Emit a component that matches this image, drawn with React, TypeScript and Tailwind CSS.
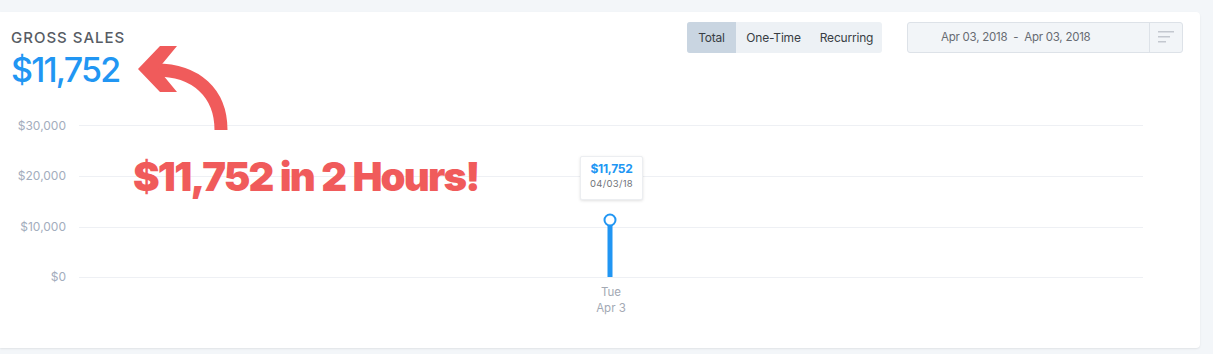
import React from "react";

const font = { fontFamily: "Inter, 'Noto Sans', sans-serif" };

export default function App() {
  return (
    <div className="w-[1213px] h-[354px] bg-[#f3f6f9] pt-[12px]" style={font}>
      <div className="relative w-[1200px] h-[336px] bg-white rounded-r-[4px] shadow-[0_1px_2px_rgba(0,0,0,0.08)] flex flex-col">
        {/* header */}
        <div className="h-[98px] flex justify-between pl-[11px] pr-[17px]">
          <div className="pt-[17px]">
            <div className="text-[15px] leading-[18px] tracking-[1px] text-[#575c64] font-medium">GROSS SALES</div>
            <div className="mt-[4px] text-[34px] leading-[38px] tracking-[-1.8px] text-[#2196f3] font-medium">$11,752</div>
          </div>
          <div className="flex pt-[10px] gap-[25px]">
            <div className="flex h-[31px] bg-[#edf1f5] rounded-[3px] text-[12px] text-[#383d44] tracking-[-0.2px]">
              <div className="w-[49px] flex items-center justify-center bg-[#c9d5e1] rounded-l-[3px]">Total</div>
              <div className="w-[75px] flex items-center justify-center">One-Time</div>
              <div className="w-[71px] flex items-center justify-center">Recurring</div>
            </div>
            <div className="flex h-[31px] w-[276px] bg-[#f2f5f8] border border-[#dde2e8] rounded-[3px]">
              <div className="flex-1 flex items-center pl-[33px] text-[11.5px] tracking-[-0.25px] text-[#676b72] whitespace-pre">Apr 03, 2018  -  Apr 03, 2018</div>
              <div className="w-[33px] border-l border-[#dde2e8] flex items-center justify-center">
                <svg width="17" height="13" viewBox="0 0 17 13">
                  <rect x="0" y="0" width="16" height="1.5" fill="#c3c8cf" />
                  <rect x="0" y="5" width="12" height="1.5" fill="#c3c8cf" />
                  <rect x="0" y="10" width="8" height="1.5" fill="#c3c8cf" />
                </svg>
              </div>
            </div>
          </div>
        </div>
        {/* chart */}
        <svg width="1200" height="238" viewBox="0 0 1200 238" className="block">
          {[15, 66, 117, 167].map((y) => (
            <line key={y} x1="79" x2="1143" y1={y + 0.5} y2={y + 0.5} stroke="#eef0f4" strokeWidth="1" />
          ))}
          <g fill="#a3adbd" fontSize="12" textAnchor="end" fontFamily="Inter, 'Noto Sans', sans-serif">
            <text x="66" y="19.5">$30,000</text>
            <text x="66" y="70">$20,000</text>
            <text x="66" y="121">$10,000</text>
            <text x="66" y="171">$0</text>
          </g>
          <rect x="607.5" y="112" width="5" height="55" fill="#2196f3" />
          <circle cx="610" cy="110" r="5.5" fill="#fff" stroke="#2196f3" strokeWidth="2" />
          <g fill="#a3a9b4" fontSize="11.5" textAnchor="middle" fontFamily="Inter, 'Noto Sans', sans-serif">
            <text x="611" y="186">Tue</text>
            <text x="611" y="202">Apr 3</text>
          </g>
        </svg>

        {/* tooltip */}
        <div className="absolute left-[580px] top-[144px] w-[63px] h-[44px] bg-white border border-[#eceef1] rounded-[2px] shadow-[0_1px_3px_rgba(0,0,0,0.12)] flex flex-col items-center pt-[5px]">
          <div className="text-[12px] leading-[14px] font-bold text-[#2196f3] tracking-[-0.3px]">$11,752</div>
          <div className="text-[9.5px] leading-[12px] mt-[2px] text-[#6f737a] tracking-[0.3px]">04/03/18</div>
        </div>

        {/* annotation */}
        <svg className="absolute left-0 top-[-12px]" width="260" height="150" viewBox="0 0 260 150">
          <path d="M 156 70 C 196 70, 221 93, 221 130" fill="none" stroke="#f05b5b" strokeWidth="13" />
          <polygon points="138,69 160,46 177,46 158,69 177,92 160,92" fill="#f05b5b" />
        </svg>
        <div className="absolute left-[133px] top-[140px] text-[40px] leading-[50px] font-black text-[#f05b5b] tracking-[-1.8px] [word-spacing:1px] whitespace-nowrap">
          $11,752 in 2 Hours!
        </div>
      </div>
    </div>
  );
}
